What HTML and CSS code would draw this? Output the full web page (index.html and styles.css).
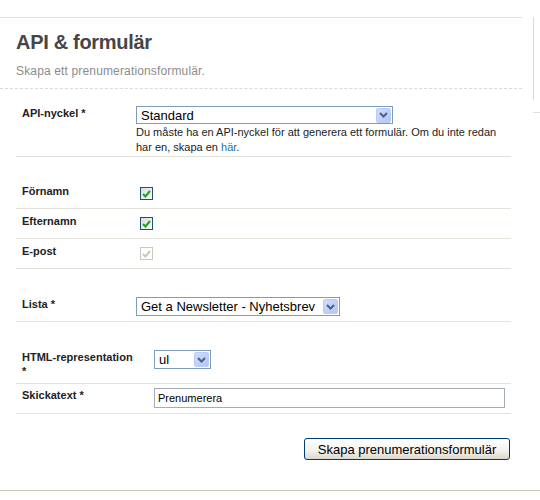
FILE: index.html
```html
<!DOCTYPE html>
<html lang="sv">
<head>
    <meta charset="UTF-8">
    <title>API &amp; formulär</title>
    <link rel="stylesheet" href="styles.css">
</head>
<body>
    <div class="page">
        <div class="main">
            <div class="header">
                <h1>API &amp; formulär</h1>
                <p class="intro">Skapa ett prenumerationsformulär.</p>
            </div>

            <form class="form">
                <div class="group">
                    <div class="row row-api">
                        <label class="label">API-nyckel *</label>
                        <div class="field">
                            <div class="select select-api">
                                <span class="select-value">Standard</span>
                                <span class="select-arrow"><svg width="9" height="6" viewBox="0 0 9 6"><path d="M1 1l3.5 3.5L8 1" fill="none" stroke="#4d6185" stroke-width="2"/></svg></span>
                            </div>
                            <p class="help">Du måste ha en API-nyckel för att generera ett formulär. Om du inte redan har en, skapa en <a href="#">här</a>.</p>
                        </div>
                    </div>
                </div>

                <div class="group">
                    <div class="row row-check">
                        <label class="label">Förnamn</label>
                        <div class="field"><span class="checkbox"><svg width="9" height="8" viewBox="0 0 9 8"><path d="M1 4l2.5 2.5L8 1" fill="none" stroke="#21a121" stroke-width="2"/></svg></span></div>
                    </div>
                    <div class="row row-check">
                        <label class="label">Efternamn</label>
                        <div class="field"><span class="checkbox"><svg width="9" height="8" viewBox="0 0 9 8"><path d="M1 4l2.5 2.5L8 1" fill="none" stroke="#21a121" stroke-width="2"/></svg></span></div>
                    </div>
                    <div class="row row-check">
                        <label class="label">E-post</label>
                        <div class="field"><span class="checkbox disabled"><svg width="9" height="8" viewBox="0 0 9 8"><path d="M1 4l2.5 2.5L8 1" fill="none" stroke="#cac8bb" stroke-width="2"/></svg></span></div>
                    </div>
                </div>

                <div class="group">
                    <div class="row">
                        <label class="label">Lista *</label>
                        <div class="field">
                            <div class="select select-list">
                                <span class="select-value">Get a Newsletter - Nyhetsbrev</span>
                                <span class="select-arrow"><svg width="9" height="6" viewBox="0 0 9 6"><path d="M1 1l3.5 3.5L8 1" fill="none" stroke="#4d6185" stroke-width="2"/></svg></span>
                            </div>
                        </div>
                    </div>
                </div>

                <div class="group group-wide">
                    <div class="row">
                        <label class="label">HTML-representation *</label>
                        <div class="field">
                            <div class="select select-small">
                                <span class="select-value">ul</span>
                                <span class="select-arrow"><svg width="9" height="6" viewBox="0 0 9 6"><path d="M1 1l3.5 3.5L8 1" fill="none" stroke="#4d6185" stroke-width="2"/></svg></span>
                            </div>
                        </div>
                    </div>
                    <div class="row row-text">
                        <label class="label">Skickatext *</label>
                        <div class="field">
                            <input type="text" class="text-input" value="Prenumerera">
                        </div>
                    </div>
                </div>

                <div class="actions">
                    <button type="button" class="button">Skapa prenumerationsformulär</button>
                </div>
            </form>
        </div>

        <div class="side">
            <div class="side-box"></div>
            <div class="side-stub"></div>
        </div>
    </div>
    <div class="footer"></div>
</body>
</html>
```

FILE: styles.css
```css
body {
    margin: 0;
    padding: 0;
    background: #fff;
    color: #222;
    font-family: 'Liberation Sans', Arial, sans-serif;
    font-size: 11px;
}

.page {
    display: flex;
    align-items: flex-start;
}

.main {
    width: 522px;
    margin-top: 17px;
    border-top: 1px solid #e2e1d8;
    padding-bottom: 30px;
}

.header {
    padding: 12px 16px 10px;
    border-bottom: 1px dashed #dcdbd0;
}

.header h1 {
    margin: 0;
    font-size: 20px;
    line-height: 24px;
    letter-spacing: -0.3px;
    color: #464646;
}

.intro {
    margin: 10px 0 0;
    font-size: 12px;
    line-height: 14px;
    color: #8c8c8c;
    letter-spacing: 0.15px;
}

.form {
    width: 495px;
    margin-left: 16px;
}

.group {
    margin-top: 22px;
}

.group:first-child {
    margin-top: 11px;
}

.row {
    display: grid;
    grid-template-columns: 120px 1fr;
    padding: 6px 0 5px;
    border-bottom: 1px solid #e3e2da;
}

.group-wide .row {
    grid-template-columns: 138px 1fr;
}

.group-wide .label {
    padding-right: 18px;
}

.row-api {
    padding-bottom: 1px;
}

.row-check {
    padding: 8px 0;
}

.row-check .label {
    margin-top: -3px;
}

.row-text {
    padding-top: 4px;
}

.label {
    padding-left: 6px;
    padding-right: 6px;
    font-weight: bold;
    line-height: 14px;
    color: #222;
}

.field {
    display: flex;
    flex-direction: column;
    align-items: flex-start;
}

.help {
    margin: 1px 0 0;
    line-height: 15px;
    color: #222;
}

.help a {
    color: #21759b;
    text-decoration: none;
}

.select {
    display: flex;
    align-items: center;
    box-sizing: border-box;
    height: 19px;
    border: 1px solid #7f9db9;
    background: #fff;
    padding: 1px;
    font-size: 13px;
    color: #000;
}

.select-value {
    flex: 1;
    padding-left: 3px;
    white-space: nowrap;
}

.select-arrow {
    display: flex;
    align-items: center;
    justify-content: center;
    box-sizing: border-box;
    width: 15px;
    height: 15px;
    border: 1px solid #bacbf5;
    border-radius: 2px;
    background: linear-gradient(135deg, #d0dcfc, #b2c6f6);
}

.select-api {
    width: 257px;
    height: 18px;
}

.select-list {
    width: 204px;
}

.select-list .select-arrow {
    margin-left: 4px;
}

.select-small {
    width: 57px;
}

.checkbox {
    display: flex;
    align-items: center;
    justify-content: center;
    box-sizing: border-box;
    width: 13px;
    height: 13px;
    margin-left: 4px;
    border: 1px solid #1c5180;
    background: linear-gradient(135deg, #dcdcd7, #fbfbf9);
}

.checkbox.disabled {
    border-color: #cac8bb;
    background: #fff;
}

.text-input {
    box-sizing: border-box;
    width: 351px;
    height: 20px;
    margin: 0;
    padding: 0 3px;
    border: 1px solid #a5acb5;
    font-family: 'Liberation Sans', Arial, sans-serif;
    font-size: 11px;
    color: #000;
}

.actions {
    display: flex;
    justify-content: flex-end;
    margin-top: 24px;
    padding-right: 1px;
}

.button {
    box-sizing: border-box;
    width: 206px;
    height: 22px;
    padding: 0;
    border: 1px solid #003c74;
    border-radius: 3px;
    background: linear-gradient(#ffffff, #f2f1ec 60%, #dcd8cc);
    font-family: 'Liberation Sans', Arial, sans-serif;
    font-size: 13px;
    color: #000;
}

.side {
    margin-left: 11px;
    margin-top: 17px;
}

.side-box {
    width: 6px;
    height: 83px;
    border-left: 1px solid #dddcd4;
}

.side-stub {
    width: 7px;
    margin-top: 12px;
    border-top: 1px solid #e2e1d8;
}

.footer {
    border-top: 1px solid #cdcabb;
}
```
